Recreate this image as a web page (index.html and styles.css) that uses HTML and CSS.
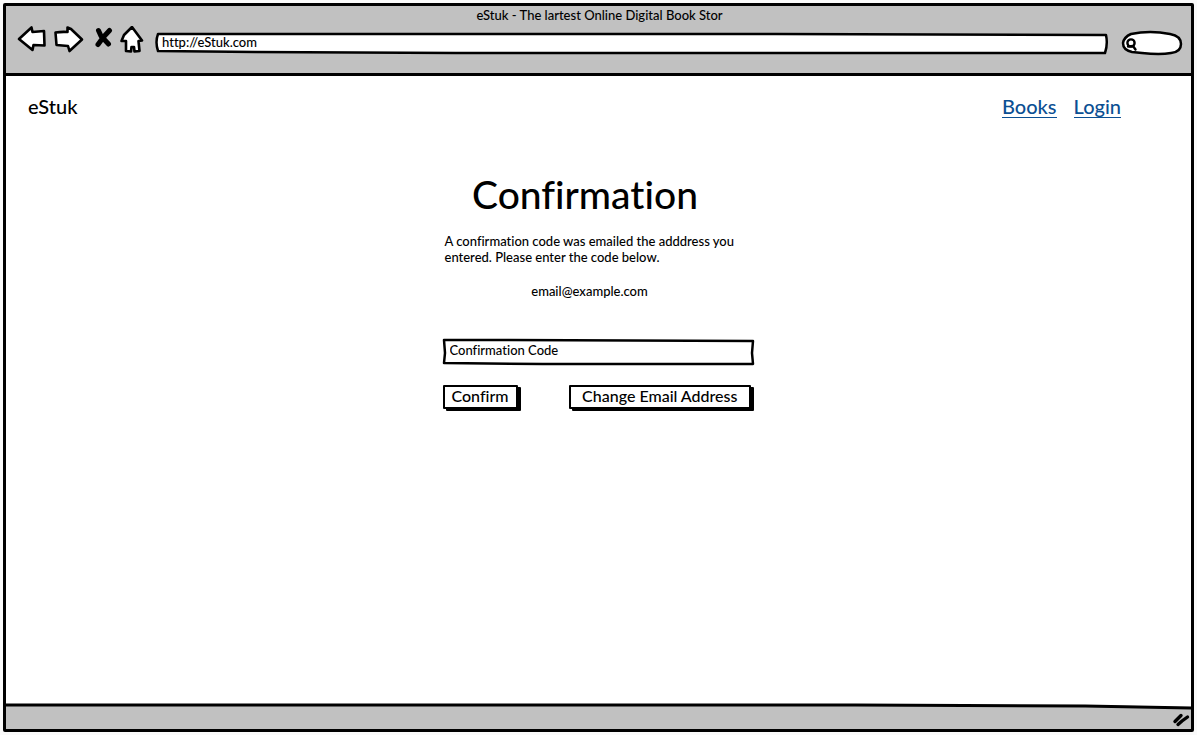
FILE: index.html
```html
<!DOCTYPE html>
<html lang="en">
<head>
<meta charset="utf-8">
<meta name="viewport" content="width=device-width, initial-scale=1">
<title>eStuk - The lartest Online Digital Book Stor</title>
<link rel="stylesheet" href="styles.css">
</head>
<body>
<div class="window">
  <header class="chrome">
    <div class="chrome-title">eStuk - The lartest Online Digital Book Stor</div>
    <div class="toolbar">
      <button class="tool" type="button" aria-label="Back">
        <svg class="icon" width="30" height="30" viewBox="0 0 30 30"><path d="M2 13 L14.500 1.500 L15.500 6 L27 5 L27.500 19.500 L16.500 19 L15.500 24 Z"/></svg>
      </button>
      <button class="tool tool-forward" type="button" aria-label="Forward">
        <svg class="icon" width="30" height="30" viewBox="0 0 30 30"><path d="M1.500 6.500 Q8 5.500 13.500 6 L13.500 1.500 L17 3 L28 13.500 L15.500 25 L14 20 L2.500 19 Z"/></svg>
      </button>
      <button class="tool tool-stop" type="button" aria-label="Stop">
        <svg class="icon" width="18" height="30" viewBox="0 0 18 30"><path class="heavy" d="M3.500 4.500 L6 10 L13.500 18 M14.500 4.500 L8.500 11 L3 18.500"/></svg>
      </button>
      <button class="tool tool-home" type="button" aria-label="Home">
        <svg class="icon" width="26" height="30" viewBox="0 0 26 30"><path d="M13 1 L23 14.500 L19.500 15 L20.500 25 L15.500 25.500 L15 21 L12.500 21 L12 25.500 L7 25 L7 15 L2.500 15 L5 9 Z"/></svg>
      </button>
      <div class="address">
        <svg class="sketch" viewBox="0 0 952 22" preserveAspectRatio="none" aria-hidden="true"><path d="M3 2 L280 2 L620 2 L950 3 Q952 12 949 21 L300 21 L100 20 L3 19 Q0 10 3 2 Z"/></svg>
        <input class="address-input" type="text" aria-label="Address" value="http://eStuk.com">
      </div>
      <div class="search">
        <svg class="sketch" viewBox="0 0 60 24" preserveAspectRatio="none" aria-hidden="true"><path d="M9 3 Q28 -1 48 3 Q59 5 59 13 Q59 21 49 22 Q38 24 20 22 L10 21 Q1 19 1 12 Q2 6 9 3 Z"/></svg>
        <svg class="lens" width="14" height="14" viewBox="0 0 14 14" aria-hidden="true"><circle cx="6" cy="5" r="3.600"/><path d="M3 8.500 L8 8 L10.500 11.500"/></svg>
        <input class="search-input" type="search" aria-label="Search">
      </div>
    </div>
  </header>

  <main class="page">
    <nav class="site-nav">
      <span class="brand">eStuk</span>
      <div class="links"><a href="#books">Books</a><a href="#login">Login</a></div>
    </nav>
    <form class="confirm">
      <h1 class="heading">Confirmation</h1>
      <p class="message">A confirmation code was emailed the adddress you entered. Please enter the code below.</p>
      <p class="email">email@example.com</p>
      <div class="field">
        <svg class="sketch" viewBox="0 0 312 26" preserveAspectRatio="none" aria-hidden="true"><path d="M1 1 L60 1 L310 2 L309 14 L310 25 L100 25 L1 24 L2 14 Z"/></svg>
        <input class="field-input" type="text" aria-label="Confirmation Code" placeholder="Confirmation Code">
      </div>
      <div class="actions">
        <button class="button" type="submit">Confirm</button>
        <button class="button button-wide" type="button">Change Email Address</button>
      </div>
    </form>
  </main>

  <footer class="status">
    <svg class="status-line" viewBox="0 0 1186 5" preserveAspectRatio="none" aria-hidden="true"><path d="M0 0 L1186 0 L1186 3 L1080 1 L0 1 Z" fill="#fff"/><path class="line" d="M0 1 L850 1 L1080 2 L1186 4"/></svg>
    <svg class="grip" width="18" height="16" viewBox="0 0 18 16" aria-hidden="true"><path d="M3 10.500 L9 4.500 M6 13.500 L10 10 L15.500 6"/></svg>
  </footer>
</div>
</body>
</html>
```
FILE: styles.css
```css
* {
  box-sizing: border-box;
}

body {
  margin: 0;
  padding: 3px;
  background: #fafafa;
  color: #000;
  font-family: Lato, "Noto Sans", sans-serif;
  font-size: 13px;
  font-weight: 500;
  font-variant-ligatures: none;
}

button,
input {
  font: inherit;
  font-variant-ligatures: none;
  color: inherit;
}

.window {
  display: flex;
  flex-direction: column;
  min-height: calc(100vh - 6px);
  background: #fff;
  border: 3px solid #000;
  border-radius: 2px;
}

.chrome {
  height: 70px;
  padding: 0 9px 0 11px;
  background: #c1c1c1;
  border-bottom: 3px solid #000;
}

.chrome-title {
  height: 20px;
  line-height: 18px;
  text-align: center;
}

.toolbar {
  display: flex;
  align-items: center;
  height: 34px;
}

.tool {
  display: flex;
  padding: 0;
  margin: 0 0 4px;
  background: none;
  border: 0;
}

.tool-forward {
  margin-left: 7px;
}

.tool-stop {
  margin-left: 11px;
}

.tool-home {
  margin-left: 6px;
}

.icon path {
  fill: #fff;
  stroke: #000;
  stroke-width: 2.6px;
  stroke-linejoin: round;
  stroke-linecap: round;
}

.icon .heavy {
  fill: none;
  stroke-width: 5px;
}

.address {
  position: relative;
  flex: 1;
  height: 22px;
  margin-left: 10px;
}

.sketch {
  position: absolute;
  inset: 0;
  width: 100%;
  height: 100%;
  overflow: visible;
  pointer-events: none;
}

.sketch path {
  fill: #fff;
  stroke: #000;
  stroke-width: 2.5px;
  stroke-linejoin: round;
  vector-effect: non-scaling-stroke;
}

.address-input,
.search-input,
.field-input {
  position: relative;
  display: block;
  width: 100%;
  height: 100%;
  margin: 0;
  padding: 0 7px;
  background: none;
  border: 0;
  outline: 0;
}

.address-input {
  padding-bottom: 2px;
}

.search {
  position: relative;
  width: 60px;
  height: 24px;
  margin-left: 14px;
}

.search-input {
  padding-left: 20px;
}

.lens {
  position: absolute;
  left: 3px;
  top: 7px;
  fill: none;
  stroke: #000;
  stroke-width: 2.4px;
  stroke-linecap: round;
}

.page {
  flex: 1;
}

.site-nav {
  display: flex;
  align-items: flex-start;
  justify-content: space-between;
  padding: 18px 70px 0 22px;
  font-size: 20px;
  line-height: 24px;
}

.links {
  display: flex;
  gap: 17px;
}

.links a {
  height: 24px;
  color: #0b4f93;
  text-decoration: none;
  border-bottom: 1px solid #0b4f93;
}

.confirm {
  width: 312px;
  max-width: 100%;
  margin: 52px auto 0;
}

.heading {
  margin: 0;
  padding-right: 27px;
  font-size: 39px;
  font-weight: 500;
  line-height: 48px;
  text-align: center;
}

.message {
  margin: 15px 0 0;
  padding-left: 2px;
  line-height: 16px;
}

.email {
  margin: 18px 0 0;
  padding-right: 18px;
  line-height: 16px;
  text-align: center;
}

.field {
  position: relative;
  height: 26px;
  margin-top: 40px;
}

.field-input {
  padding-bottom: 4px;
}

.field-input::placeholder {
  color: #000;
  opacity: 1;
}

.actions {
  display: flex;
  justify-content: space-between;
  margin-top: 20px;
  padding-right: 4px;
}

.button {
  height: 24px;
  padding: 0 7px 2px;
  font-size: 16px;
  line-height: 18px;
  white-space: nowrap;
  background: #fff;
  border: 2px solid #000;
  border-radius: 1px;
  box-shadow: 3px 2px 0 #000;
}

.button-wide {
  padding: 0 11px 2px;
}

.status {
  position: relative;
  display: flex;
  align-items: center;
  justify-content: flex-end;
  height: 25px;
  padding-top: 4px;
  background: #c1c1c1;
}

.status-line {
  position: absolute;
  top: 0;
  left: 0;
  width: 100%;
  height: 5px;
  overflow: visible;
}

.status-line .line {
  fill: none;
  stroke: #000;
  stroke-width: 3px;
  vector-effect: non-scaling-stroke;
}

.grip {
  margin-right: 1px;
  fill: none;
  stroke: #000;
  stroke-width: 3.4px;
  stroke-linecap: round;
}
```
